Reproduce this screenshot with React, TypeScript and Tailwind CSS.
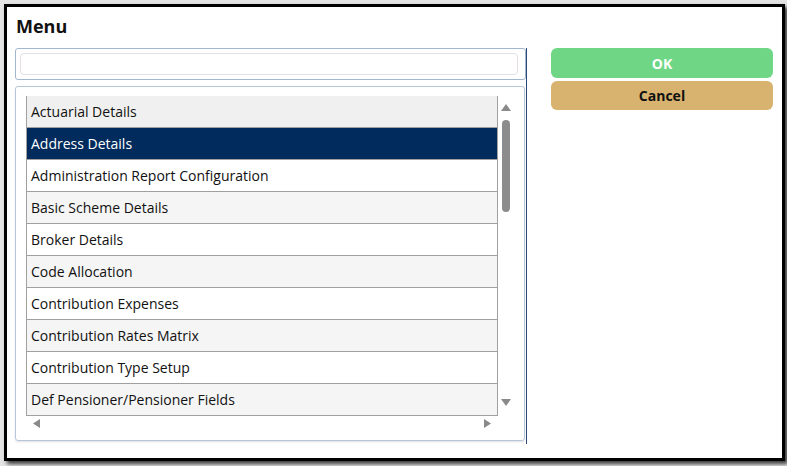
import React from "react";

const items = [
  "Actuarial Details",
  "Address Details",
  "Administration Report Configuration",
  "Basic Scheme Details",
  "Broker Details",
  "Code Allocation",
  "Contribution Expenses",
  "Contribution Rates Matrix",
  "Contribution Type Setup",
  "Def Pensioner/Pensioner Fields",
];

export default function App() {
  return (
    <div
      className="w-[787px] h-[466px] bg-[#e4e4e4] pt-[4px] pl-[4px] overflow-hidden"
      style={{ fontFamily: "'Open Sans', 'Noto Sans', sans-serif" }}
    >
      <div className="w-[781px] h-[457px] border-[3px] border-black bg-white shadow-[3px_3px_4px_rgba(0,0,0,0.75)] pt-[7px] px-[8px] flex flex-col">
        <div className="h-[24px] leading-[24px] text-[18px] font-bold text-[#111] pl-[1px]">Menu</div>
        <div className="mt-[10px] flex">
          <div className="w-[512px] h-[396px] border-r border-[#2c4a78] flex flex-col">
            <div className="w-[511px] h-[32px] border border-[#a3b6cf] rounded-[3px] pt-[4px] pl-[4px]">
              <div className="w-[498px] h-[22px] border border-[#e6dfdf] rounded-[4px] bg-white" />
            </div>
            <div className="mt-[6px] w-[510px] h-[355px] border border-[#b7c6d9] rounded-[3px] shadow-[0_1px_2px_rgba(0,0,0,0.12)] pt-[9px] pl-[10px] flex flex-col">
              <div className="flex">
                <div className="w-[472px] h-[320px] border-l border-r border-[#a0a0a0] flex flex-col">
                  {items.map((t, i) => {
                    const sel = i === 1;
                    const bg = sel
                      ? "bg-[#002b5c] text-white"
                      : i === 0
                      ? "bg-[#f0f0f0] text-[#111]"
                      : i % 2 === 0
                      ? "bg-white text-[#111]"
                      : "bg-[#f5f5f5] text-[#111]";
                    return (
                      <div
                        key={t}
                        className={`h-[32px] shrink-0 border-b border-[#a0a0a0] pl-[4px] flex items-center text-[14px] ${bg}`}
                      >
                        {t}
                      </div>
                    );
                  })}
                </div>
                <div className="w-[14px] h-[320px] flex flex-col items-center pl-[1px]">
                  <svg width="10" height="7" viewBox="0 0 10 7" className="mt-[8px]">
                    <polygon points="5,0 10,7 0,7" fill="#8a8a8a" />
                  </svg>
                  <div className="mt-[9px] w-[8px] h-[92px] rounded-full bg-[#8c8c8c]" />
                  <div className="flex-1" />
                  <svg width="10" height="7" viewBox="0 0 10 7" className="mb-[10px]">
                    <polygon points="0,0 10,0 5,7" fill="#8a8a8a" />
                  </svg>
                </div>
              </div>
              <div className="w-[472px] h-[15px] flex items-center justify-between px-[7px]">
                <svg width="7" height="9" viewBox="0 0 7 9">
                  <polygon points="7,0 7,9 0,4.5" fill="#8a8a8a" />
                </svg>
                <svg width="7" height="9" viewBox="0 0 7 9">
                  <polygon points="0,0 7,4.5 0,9" fill="#8a8a8a" />
                </svg>
              </div>
            </div>
          </div>
          <div className="ml-[24px] w-[222px] flex flex-col gap-[3px]">
            <button className="h-[30px] rounded-[6px] bg-[#6fd685] text-white font-bold text-[14px]">OK</button>
            <button className="h-[29px] rounded-[6px] bg-[#d8b36f] text-[#111] font-bold text-[14px]">Cancel</button>
          </div>
        </div>
      </div>
    </div>
  );
}
